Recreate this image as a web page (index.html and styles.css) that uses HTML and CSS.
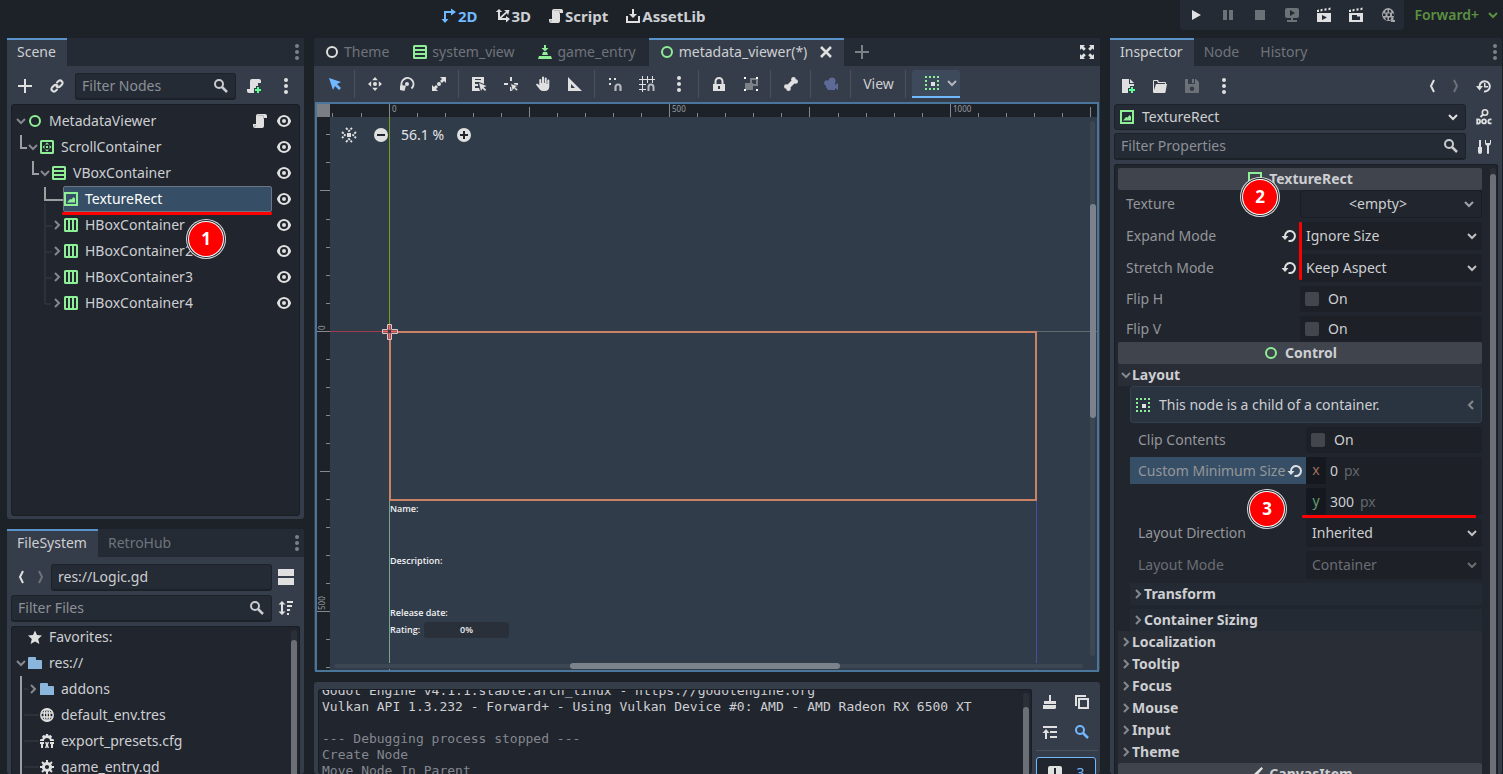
FILE: index.html
```html
<!DOCTYPE html>
<html lang="en">
<head>
<meta charset="utf-8">
<title>metadata_viewer.tscn - Godot Engine</title>
<link rel="stylesheet" href="styles.css">
</head>
<body>
<svg class="defs" aria-hidden="true">
  <symbol id="control" viewBox="0 0 16 16"><circle cx="8" cy="8" r="5" fill="none" stroke="currentColor" stroke-width="2"/></symbol>
  <symbol id="vbox" viewBox="0 0 16 16"><path fill-rule="evenodd" d="M2.500 1A1.500 1.500 0 0 0 1 2.500v11A1.500 1.500 0 0 0 2.500 15h11a1.500 1.500 0 0 0 1.500-1.500v-11A1.500 1.500 0 0 0 13.500 1zM3 3h10v2H3zm0 4h10v2H3zm0 4h10v2H3z"/></symbol>
  <symbol id="hbox" viewBox="0 0 16 16"><path fill-rule="evenodd" d="M2.500 1A1.500 1.500 0 0 0 1 2.500v11A1.500 1.500 0 0 0 2.500 15h11a1.500 1.500 0 0 0 1.500-1.500v-11A1.500 1.500 0 0 0 13.500 1zM3 3h2v10H3zm4 0h2v10H7zm4 0h2v10h-2z"/></symbol>
  <symbol id="scroll" viewBox="0 0 16 16"><path fill-rule="evenodd" d="M2.500 1A1.500 1.500 0 0 0 1 2.500v11A1.500 1.500 0 0 0 2.500 15h11a1.500 1.500 0 0 0 1.500-1.500v-11A1.500 1.500 0 0 0 13.500 1zM3 3h10v10H3z"/><path d="m8 3.500 2 2H6zm0 9-2-2h4zM3.500 8l2-2v4zm9 0-2 2V6zM7 7h2v2H7z"/></symbol>
  <symbol id="texrect" viewBox="0 0 16 16"><path fill-rule="evenodd" d="M1 1v14h14V1zm2 2h10v10H3z"/><path d="M4 11.500h8V7.500L10.500 6 8.500 8.500 7 8z"/></symbol>
  <symbol id="eye" viewBox="0 0 16 16"><path fill-rule="evenodd" d="M8 2C4.900 2 2.100 4.100 1.050 7.400a2 2 0 0 0 0 1.200C2.100 11.900 4.900 14 8 14s5.900-2.100 6.950-5.400a2 2 0 0 0 0-1.200C13.900 4.100 11.100 2 8 2zm0 2a4 4 0 0 1 0 8 4 4 0 0 1 0-8zm0 2a2 2 0 0 0 0 4 2 2 0 0 0 0-4z"/></symbol>
  <symbol id="script" viewBox="0 0 16 16"><path d="M6 1a2 2 0 0 0-2 2v8H1v2a2 2 0 0 0 2 2h7a2 2 0 0 0 2-2V5h3V3a2 2 0 0 0-2-2z"/><path fill="#9a9c9f" d="M6 2v1h5v3h1V3a1 1 0 0 0-1-1zM2 12v1a1 1 0 0 0 1 1 1 1 0 0 0 1-1v-1z" opacity=".6"/></symbol>
  <symbol id="scriptadd" viewBox="0 0 16 16"><path d="M6 1a2 2 0 0 0-2 2v8H1v2a2 2 0 0 0 2 2h5v-5h2V8h2V5h3V3a2 2 0 0 0-2-2z"/><path fill="#5fff97" d="M11 9h2v2h2v2h-2v2h-2v-2H9v-2h2z"/></symbol>
  <symbol id="plus" viewBox="0 0 16 16"><path d="M7 1h2v6h6v2H9v6H7V9H1V7h6z"/></symbol>
  <symbol id="link" viewBox="0 0 16 16"><g fill="none" stroke="currentColor" stroke-width="2" stroke-linecap="round"><path d="M8 4.500 9.500 3a2.500 2.500 0 0 1 3.500 3.500L11 8.500a2.400 2.400 0 0 1-3.500 0"/><path d="M8 11.500 6.500 13A2.500 2.500 0 0 1 3 9.500l2-2a2.400 2.400 0 0 1 3.500 0"/></g></symbol>
  <symbol id="search" viewBox="0 0 16 16"><circle cx="6" cy="6" r="4" fill="none" stroke="currentColor" stroke-width="2"/><path d="m9 9 5 5" stroke="currentColor" stroke-width="2.500"/></symbol>
  <symbol id="dots" viewBox="0 0 16 16"><circle cx="8" cy="2" r="2"/><circle cx="8" cy="8" r="2"/><circle cx="8" cy="14" r="2"/></symbol>
  <symbol id="down" viewBox="0 0 16 16"><path d="m4 6 4 4 4-4" fill="none" stroke="currentColor" stroke-width="2"/></symbol>
  <symbol id="right" viewBox="0 0 16 16"><path d="m6 4 4 4-4 4" fill="none" stroke="currentColor" stroke-width="2"/></symbol>
  <symbol id="back" viewBox="0 0 16 16"><path d="M10 2 7 8l3 6" fill="none" stroke="currentColor" stroke-width="2"/></symbol>
  <symbol id="fwd" viewBox="0 0 16 16"><path d="m6 2 3 6-3 6" fill="none" stroke="currentColor" stroke-width="2"/></symbol>
  <symbol id="folder" viewBox="0 0 16 16"><path d="M2 2a1 1 0 0 0-1 1v11h14V6a1 1 0 0 0-1-1H9V3a1 1 0 0 0-1-1z"/></symbol>
  <symbol id="star" viewBox="0 0 16 16"><path d="m8 1.500 2 4.600 5 .5-3.800 3.400 1.200 5L8 12.400 3.600 15l1.200-5L1 6.600l5-.5z"/></symbol>
  <symbol id="globe" viewBox="0 0 16 16"><g fill="none" stroke="currentColor" stroke-width="1.500"><circle cx="8" cy="8" r="6.200"/><ellipse cx="8" cy="8" rx="2.800" ry="6"/><path d="M8 2v12M2 6h12M2 10h12"/></g></symbol>
  <symbol id="gear" viewBox="0 0 16 16"><circle cx="8" cy="8" r="3.600" fill="none" stroke="currentColor" stroke-width="3"/><path d="M7 1h2v3H7zm0 11h2v3H7zM1 7h3v2H1zm11 0h3v2h-3zM2.300 3.700l1.400-1.400 2 2-1.400 1.400zm8 8 1.400-1.400 2 2-1.400 1.400zm2-9.400 1.400 1.400-2 2-1.400-1.400zM4.300 10.300l1.400 1.400-2 2-1.400-1.400z"/></symbol>
  <symbol id="geartxt" viewBox="0 0 16 16"><path d="M7 1h2l.5 1.800L11.500 2 13 3.500l-1 2L15 6.500V8h-4a3 3 0 0 0-6 0H1V6.500l3-1-1-2L4.500 2l2 .8zM1 9h4v2H4v4H2v-4H1zm5 0h1.500L8 10.500 8.500 9H10l-1 3 1 3H8.500L8 13.500 7.500 15H6l1-3zm5 0h4v2h-1v4h-2v-4h-1z"/></symbol>
  <symbol id="panels" viewBox="0 0 16 16"><path d="M0 0h16v7H0zm0 9h16v7H0z"/></symbol>
  <symbol id="sort" viewBox="0 0 16 16"><path d="m4 1 3.500 3.500H5v7h2.500L4 15 .5 11.500H3v-7H.5zM9 1h6v2H9zm0 4h5v2H9zm0 4h3v2H9zm0 4h2v2H9z"/></symbol>
  <symbol id="d2" viewBox="0 0 16 16"><path d="M10 0.500 15 4l-5 3.500V5H5v6h2.500L4 15 .5 11H3V3h7z"/></symbol>
  <symbol id="d3" viewBox="0 0 16 16"><path d="M4 1 .8 4H3v8h8v2.500l4-3.500-4-3v2H6.500L12 5l1 2.500L14.500 2 9 2l2 1.500L5 9V4h2.200z"/></symbol>
  <symbol id="asset" viewBox="0 0 16 16"><path d="M7 1h2v5h3l-4 4-4-4h3zM1 8h2v5h10V8h2v7H1z"/></symbol>
  <symbol id="play" viewBox="0 0 16 16"><path d="M4 3v10l9-5z"/></symbol>
  <symbol id="pause" viewBox="0 0 16 16"><path d="M3 3h4v10H3zm6 0h4v10H9z"/></symbol>
  <symbol id="stop" viewBox="0 0 16 16"><path d="M3 3h10v10H3z"/></symbol>
  <symbol id="remote" viewBox="0 0 16 16"><path fill-rule="evenodd" d="M3 1a2 2 0 0 0-2 2v6a2 2 0 0 0 2 2h4v2H3v2h10v-2H9v-2h4a2 2 0 0 0 2-2V3a2 2 0 0 0-2-2zm3 2 5 3-5 3z"/></symbol>
  <symbol id="clap" viewBox="0 0 16 16"><path fill-rule="evenodd" d="M1 6h14v9H1zm5 2v5l5-2.500zM1 3l2-.5V5H1zm3.500-.8 2-.4V4l-2 .4zm4-.6 2-.4v2.200l-2 .4zm4-.6 2-.4v2.200l-2 .4z"/></symbol>
  <symbol id="clapf" viewBox="0 0 16 16"><path fill-rule="evenodd" d="M1 6h14v9H1zm3 2v5h8V9.500H9V8zM1 3l2-.5V5H1zm3.500-.8 2-.4V4l-2 .4zm4-.6 2-.4v2.200l-2 .4zm4-.6 2-.4v2.200l-2 .4z"/></symbol>
  <symbol id="reel" viewBox="0 0 16 16"><path fill-rule="evenodd" d="M8 1a6.500 6.500 0 1 0 3 12.500V15h4v-2h-1.500v-2.500A6.500 6.500 0 0 0 8 1zM6 3h1.500v2.500H5zm3 0h1.500l1 2.500H9zM3 6.500h2.500V9H3zm4.500 0H10V9H7.500zm4.500 0h2V9h-2zM5 10.500h2.500V13H6zm4 0h2.500l-1 2.500H9z"/></symbol>
  <symbol id="spawn" viewBox="0 0 16 16"><path d="M7 1h2v3h2.500L8 7.500 4.500 4H7zM6 8h4l1 3H5zM2 12h12l1 3H1z"/></symbol>
  <symbol id="close" viewBox="0 0 16 16"><path d="m3 3 10 10M13 3 3 13" fill="none" stroke="currentColor" stroke-width="2.500"/></symbol>
  <symbol id="expand" viewBox="0 0 16 16"><path d="M1 1h5L4.500 2.500l2.300 2.300-2 2L2.500 4.500 1 6zm9 0h5v5l-1.500-1.500-2.300 2.300-2-2 2.300-2.300zM4.800 9.200l2 2-2.300 2.300L6 15H1v-5l1.500 1.500zm6.400 0 2.300 2.300L15 10v5h-5l1.500-1.500-2.300-2.300z"/></symbol>
  <symbol id="cursor" viewBox="0 0 16 16"><path d="m2 2 4 12 2-4 4 4 2-2-4-4 4-2z"/></symbol>
  <symbol id="move" viewBox="0 0 16 16"><circle cx="8" cy="8" r="2"/><path d="m8 1 2.800 3.200H5.200zm0 14-2.800-3.200h5.600zM1 8l3.200-2.800v5.600zm14 0-3.200 2.800V5.200z"/></symbol>
  <symbol id="rotate" viewBox="0 0 16 16"><path d="M12.500 12.500A6 6 0 1 0 3 10.500" fill="none" stroke="currentColor" stroke-width="2"/><path d="M1 9.500h6L5.500 15 1 14z"/><circle cx="8" cy="8" r="2"/></symbol>
  <symbol id="scale" viewBox="0 0 16 16"><circle cx="8" cy="8" r="2"/><path d="M9 1h6v6l-2-2-2 2-2-2 2-2zM1 9l2 2 2-2 2 2-2 2 2 2H1z"/></symbol>
  <symbol id="listsel" viewBox="0 0 16 16"><path d="M1 1h12v7l-5-2H4v2h3v2H4v2h4l1 3H1zm3 2v1h6V3z" fill-rule="evenodd"/><path d="m8 7 2 8 1.500-2.500L14 15l1.200-1.200-2.500-2.500L15.500 10z"/></symbol>
  <symbol id="pivot" viewBox="0 0 16 16"><path d="M7 1h2v4H7zM1 7h4v2H1zm6 4h2v4H7zm4-4h4v2h-4z"/><path d="m7.500 7.500 2 8 1.600-2.800L13.500 15l1.500-1.500-2.500-2.300L15.500 10z" stroke="#363d4a" stroke-width=".8"/></symbol>
  <symbol id="hand" viewBox="0 0 16 16"><path d="M7 1.500a1 1 0 0 1 2 0V7h.7V2.500a1 1 0 0 1 2 0V8h.6V4.500a1 1 0 0 1 2 0V11a4.500 4.500 0 0 1-4.500 4H8c-2 0-3.500-1.500-4.500-3.200L1.200 9c-.4-1 .8-1.800 1.800-1l1.300 1.300V4a1 1 0 0 1 2 0v3H7z"/></symbol>
  <symbol id="ruler" viewBox="0 0 16 16"><path fill-rule="evenodd" d="M1 1v14h14zm3 7 4 4H4z"/></symbol>
  <symbol id="snap" viewBox="0 0 16 16"><path d="M2 2h2v2H2zm5 0h2v2H7zM2 7h2v2H2z"/><path d="M8.500 15v-4a2.500 2.500 0 0 1 5 0v4" fill="none" stroke="#b8babd" stroke-width="2.200"/></symbol>
  <symbol id="gridsnap" viewBox="0 0 16 16"><path d="M3 0h1v3h4V0h1v3h4V0h1v3h2v1h-2v3h-1V4H9v3H8V4H4v4h3v1H4v4h3v1H4v2H3v-2H0v-1h3V9H0V8h3V4H0V3h3z"/><path d="M9.500 15v-4a2.500 2.500 0 0 1 5 0v4" fill="none" stroke="#b8babd" stroke-width="2"/></symbol>
  <symbol id="lock" viewBox="0 0 16 16"><path fill-rule="evenodd" d="M8 1a4.500 4.500 0 0 0-4.500 4.500V8H2v7h12V8h-1.500V5.500A4.500 4.500 0 0 0 8 1zm0 2a2.500 2.500 0 0 1 2.500 2.500V8h-5V5.500A2.500 2.500 0 0 1 8 3zM7 10h2v3H7z"/></symbol>
  <symbol id="group" viewBox="0 0 16 16"><path d="M7 2h8v8h-5v4H2V7h5z" fill="#7d8188"/><path d="M9 4h4v4h-3V7H9z" fill="#363d4a"/><path d="M1 1h2v2H1zm12 0h2v2h-2zM1 13h2v2H1zm12 0h2v2h-2z" fill="#fff"/></symbol>
  <symbol id="bone" viewBox="0 0 16 16"><path d="m4.500 11.500 7-7" stroke="currentColor" stroke-width="4"/><circle cx="3.300" cy="10.500" r="2.300"/><circle cx="5.500" cy="12.700" r="2.300"/><circle cx="10.500" cy="3.300" r="2.300"/><circle cx="12.700" cy="5.500" r="2.300"/></symbol>
  <symbol id="cam" viewBox="0 0 16 16"><circle cx="9" cy="5" r="3.500"/><circle cx="4" cy="7" r="2.800"/><path d="M3 7h9v2l3-2v7l-3-2v2H5l-2-3z"/></symbol>
  <symbol id="anchor" viewBox="0 0 16 16"><path fill="#8eef97" d="M1 1h2v2H1zm4 0h2v2H5zm4 0h2v2H9zm4 0h2v2h-2zM1 5h2v2H1zm12 0h2v2h-2zM1 9h2v2H1zm12 0h2v2h-2zM1 13h2v2H1zm4 0h2v2H5zm4 0h2v2H9zm4 0h2v2h-2z"/><path fill="#e0e0e0" d="M7 7h4v4H7z"/></symbol>
  <symbol id="center" viewBox="0 0 16 16"><path d="M6 6h4v4H6z"/><path d="M5 1l3 3 3-3M5 15l3-3 3 3M1 5l3 3-3 3M15 5l-3 3 3 3" fill="none" stroke="currentColor" stroke-width="1.800" stroke-dasharray="2.400 .8"/></symbol>
  <symbol id="minus" viewBox="0 0 16 16"><circle cx="8" cy="8" r="7"/><path d="M4 7h8v2H4z" fill="#20262e"/></symbol>
  <symbol id="more" viewBox="0 0 16 16"><circle cx="8" cy="8" r="7"/><path d="M7 4h2v3h3v2H9v3H7V9H4V7h3z" fill="#20262e"/></symbol>
  <symbol id="filenew" viewBox="0 0 16 16"><path d="M2 1h7v5h5v2h-4v2H8v5H2zm8 0 4 4h-4z"/><path fill="#5fff97" d="M11 9h2v2h2v2h-2v2h-2v-2H9v-2h2z"/></symbol>
  <symbol id="load" viewBox="0 0 16 16"><path d="M1 3a1 1 0 0 1 1-1h4l1 2h6a1 1 0 0 1 1 1v1h-1V5H6L5 3H2v9l2-6h11l-1.500 8a1 1 0 0 1-1 1H2a1 1 0 0 1-1-1z"/></symbol>
  <symbol id="save" viewBox="0 0 16 16"><path fill-rule="evenodd" d="M2 1a1 1 0 0 0-1 1v12a1 1 0 0 0 1 1h12a1 1 0 0 0 1-1V4l-3-3h-1v5H4V1zm6 0h2v4H8zM8 8.500a2.300 2.300 0 1 0 0 4.600 2.300 2.300 0 0 0 0-4.600z"/></symbol>
  <symbol id="history" viewBox="0 0 16 16"><path d="M3.500 9A5.200 5.200 0 1 1 8 13.500" fill="none" stroke="currentColor" stroke-width="2"/><path d="M0 8h7l-3.500 4.500zM8 5h1.500v3H12v1.500H8z"/></symbol>
  <symbol id="doc" viewBox="0 0 16 16"><circle cx="9" cy="3.500" r="2.700" fill="none" stroke="currentColor" stroke-width="1.600"/><path d="M7.300 5.300 4.500 8" stroke="currentColor" stroke-width="2"/><g fill="none" stroke="currentColor" stroke-width="1.800"><path d="M1.200 10.300v4.200h1.300a1.500 1.500 0 0 0 1.500-1.500v-1.200a1.500 1.500 0 0 0-1.500-1.500z"/><circle cx="8" cy="12.400" r="2"/><path d="M15.500 10.400h-1.200a2 2 0 0 0 0 4h1.200"/></g></symbol>
  <symbol id="tools" viewBox="0 0 16 16"><path d="M3 1h2v7h1v5a2 2 0 0 1-4 0V8h1zM9 1v3a3 3 0 0 0 2 2.800V14a1 1 0 0 0 2 0V6.800A3 3 0 0 0 15 4V1h-1v3h-4V1z"/></symbol>
  <symbol id="revert" viewBox="0 0 16 16"><path d="M4 8.500A5 5 0 1 1 9 13H7.500" fill="none" stroke="currentColor" stroke-width="2"/><path d="M.5 8H7.500L4 12z"/></symbol>
  <symbol id="brush" viewBox="0 0 16 16"><path d="M14.500 1 16 2.500 9.500 10 7 8zM6 9l2.500 2.500C7 14 4 15 1 14c2-1 2-4 5-5z"/></symbol>
  <symbol id="clear" viewBox="0 0 16 16"><path d="M7 1h2v6h5v3H2V7h5zM1 11h13v3l-1 1H1z"/></symbol>
  <symbol id="copy" viewBox="0 0 16 16"><path fill-rule="evenodd" d="M1 1h11v2H3v9H1zM4 4h11v11H4zm2 2v7h7V6z"/></symbol>
  <symbol id="collapse" viewBox="0 0 16 16"><path d="M1 2h14v2H1zm7 5h7v2H8zm0 5h7v2H8zM4 5l3.500 4H5v6H3V9H.5z"/></symbol>
  <symbol id="warn" viewBox="0 0 16 16"><path fill-rule="evenodd" d="M3 1a2 2 0 0 0-2 2v10a2 2 0 0 0 2 2h10a2 2 0 0 0 2-2V3a2 2 0 0 0-2-2zm4 2h2v6H7zm0 8h2v2H7z"/></symbol>
</svg>

<header class="topbar">
  <div class="space-a"></div>
  <nav class="modes">
    <button class="mode on"><svg class="ic"><use href="#d2"/></svg>2D</button>
    <button class="mode"><svg class="ic"><use href="#d3"/></svg>3D</button>
    <button class="mode"><svg class="ic"><use href="#script"/></svg>Script</button>
    <button class="mode"><svg class="ic"><use href="#asset"/></svg>AssetLib</button>
  </nav>
  <div class="space-b"></div>
  <div class="run">
    <button class="btn" aria-label="Play"><svg class="ic"><use href="#play"/></svg></button>
    <button class="btn dim" aria-label="Pause"><svg class="ic"><use href="#pause"/></svg></button>
    <button class="btn dim" aria-label="Stop"><svg class="ic"><use href="#stop"/></svg></button>
    <button class="btn dim" aria-label="Remote"><svg class="ic"><use href="#remote"/></svg></button>
    <button class="btn" aria-label="Play scene"><svg class="ic"><use href="#clap"/></svg></button>
    <button class="btn" aria-label="Play custom scene"><svg class="ic"><use href="#clapf"/></svg></button>
    <button class="btn soft" aria-label="Movie maker"><svg class="ic"><use href="#reel"/></svg></button>
  </div>
  <button class="renderer">Forward+<svg class="ic"><use href="#down"/></svg></button>
</header>

<main class="docks">
  <div class="left">
    <section class="dock scene">
      <div class="tabs"><button class="tab on">Scene</button><button class="menu" aria-label="Dock menu"><svg class="ic"><use href="#dots"/></svg></button></div>
      <div class="body">
        <div class="bar">
          <button class="btn" aria-label="Add node"><svg class="ic"><use href="#plus"/></svg></button>
          <button class="btn" aria-label="Instance scene"><svg class="ic"><use href="#link"/></svg></button>
          <label class="field"><input type="text" placeholder="Filter Nodes" aria-label="Filter Nodes"><svg class="ic"><use href="#search"/></svg></label>
          <button class="btn" aria-label="Attach script"><svg class="ic"><use href="#scriptadd"/></svg></button>
          <button class="btn" aria-label="More"><svg class="ic"><use href="#dots"/></svg></button>
        </div>
        <div class="tree">
          <svg class="guides"><path d="M9 30v13h6M21 56v13h6M33 82v13h19" fill="none" stroke="#9c9ea2" stroke-width="2"/><path d="M33 98v101h6M33 121h7M33 147h7M33 173h7" fill="none" stroke="#3a3e47" stroke-width="1"/></svg>
          <ul class="rows">
            <li class="row"><svg class="arrow"><use href="#down"/></svg><div class="item"><svg class="ic g"><use href="#control"/></svg>MetadataViewer</div><svg class="ic attached"><use href="#script"/></svg><button class="eye" aria-label="Toggle"><svg class="ic"><use href="#eye"/></svg></button></li>
            <li class="row l1"><svg class="arrow"><use href="#down"/></svg><div class="item"><svg class="ic g"><use href="#scroll"/></svg>ScrollContainer</div><button class="eye" aria-label="Toggle"><svg class="ic"><use href="#eye"/></svg></button></li>
            <li class="row l2"><svg class="arrow"><use href="#down"/></svg><div class="item"><svg class="ic g"><use href="#vbox"/></svg>VBoxContainer</div><button class="eye" aria-label="Toggle"><svg class="ic"><use href="#eye"/></svg></button></li>
            <li class="row l3"><svg class="arrow"></svg><div class="item sel"><svg class="ic g"><use href="#texrect"/></svg>TextureRect</div><button class="eye" aria-label="Toggle"><svg class="ic"><use href="#eye"/></svg></button></li>
            <li class="row l3"><svg class="arrow"><use href="#right"/></svg><div class="item"><svg class="ic g"><use href="#hbox"/></svg>HBoxContainer</div><button class="eye" aria-label="Toggle"><svg class="ic"><use href="#eye"/></svg></button></li>
            <li class="row l3"><svg class="arrow"><use href="#right"/></svg><div class="item"><svg class="ic g"><use href="#hbox"/></svg>HBoxContainer2</div><button class="eye" aria-label="Toggle"><svg class="ic"><use href="#eye"/></svg></button></li>
            <li class="row l3"><svg class="arrow"><use href="#right"/></svg><div class="item"><svg class="ic g"><use href="#hbox"/></svg>HBoxContainer3</div><button class="eye" aria-label="Toggle"><svg class="ic"><use href="#eye"/></svg></button></li>
            <li class="row l3"><svg class="arrow"><use href="#right"/></svg><div class="item"><svg class="ic g"><use href="#hbox"/></svg>HBoxContainer4</div><button class="eye" aria-label="Toggle"><svg class="ic"><use href="#eye"/></svg></button></li>
          </ul>
        </div>
      </div>
      <div class="mark m1"></div><div class="step s1">1</div>
    </section>

    <section class="dock files">
      <div class="tabs"><button class="tab on">FileSystem</button><button class="tab">RetroHub</button><button class="menu" aria-label="Dock menu"><svg class="ic"><use href="#dots"/></svg></button></div>
      <div class="body">
        <div class="bar flush">
          <button class="nav" aria-label="Back"><svg class="ic"><use href="#back"/></svg></button>
          <button class="nav dim" aria-label="Forward"><svg class="ic"><use href="#fwd"/></svg></button>
          <label class="field"><input type="text" value="res://Logic.gd" aria-label="Path"></label>
          <button class="btn" aria-label="Split view"><svg class="ic"><use href="#panels"/></svg></button>
        </div>
        <div class="bar flush second">
          <label class="field"><input type="text" placeholder="Filter Files" aria-label="Filter Files"><svg class="ic"><use href="#search"/></svg></label>
          <button class="btn" aria-label="Sort"><svg class="ic"><use href="#sort"/></svg></button>
        </div>
        <div class="tree">
          <svg class="guides"><path d="M9 49v120" stroke="#9c9ea2" stroke-width="2"/><path d="M12 62h4M12 88h15M12 114h15M12 140h15" stroke="#3a3e47"/></svg>
          <ul class="rows up">
            <li class="row"><svg class="arrow"></svg><div class="item"><svg class="ic"><use href="#star"/></svg>Favorites:</div></li>
            <li class="row"><svg class="arrow"><use href="#down"/></svg><div class="item"><svg class="ic b"><use href="#folder"/></svg>res://</div></li>
            <li class="row l1"><svg class="arrow"><use href="#right"/></svg><div class="item"><svg class="ic b"><use href="#folder"/></svg>addons</div></li>
            <li class="row l1"><svg class="arrow"></svg><div class="item"><svg class="ic"><use href="#globe"/></svg>default_env.tres</div></li>
            <li class="row l1"><svg class="arrow"></svg><div class="item"><svg class="ic"><use href="#geartxt"/></svg>export_presets.cfg</div></li>
            <li class="row l1"><svg class="arrow"></svg><div class="item"><svg class="ic"><use href="#gear"/></svg>game_entry.gd</div></li>
          </ul>
          <div class="vtrack"><div class="vthumb"></div></div>
        </div>
      </div>
    </section>
  </div>

  <div class="middle">
    <section class="dock editor">
      <div class="tabs scenes">
        <button class="tab"><svg class="ic"><use href="#control"/></svg>Theme</button>
        <button class="tab"><svg class="ic g"><use href="#vbox"/></svg>system_view</button>
        <button class="tab"><svg class="ic g"><use href="#spawn"/></svg>game_entry</button>
        <button class="tab on"><svg class="ic g"><use href="#control"/></svg>metadata_viewer(*)<svg class="ic x"><use href="#close"/></svg></button>
        <button class="addtab" aria-label="New scene"><svg class="ic"><use href="#plus"/></svg></button>
        <button class="full" aria-label="Distraction free"><svg class="ic"><use href="#expand"/></svg></button>
      </div>
      <div class="tools">
        <button class="btn blue" aria-label="Select"><svg class="ic"><use href="#cursor"/></svg></button><i class="sep"></i>
        <button class="btn" aria-label="Move"><svg class="ic"><use href="#move"/></svg></button>
        <button class="btn" aria-label="Rotate"><svg class="ic"><use href="#rotate"/></svg></button>
        <button class="btn" aria-label="Scale"><svg class="ic"><use href="#scale"/></svg></button><i class="sep"></i>
        <button class="btn" aria-label="List select"><svg class="ic"><use href="#listsel"/></svg></button>
        <button class="btn" aria-label="Pivot"><svg class="ic"><use href="#pivot"/></svg></button>
        <button class="btn" aria-label="Pan"><svg class="ic"><use href="#hand"/></svg></button>
        <button class="btn" aria-label="Ruler"><svg class="ic"><use href="#ruler"/></svg></button><i class="sep"></i>
        <button class="btn" aria-label="Smart snap"><svg class="ic"><use href="#snap"/></svg></button>
        <button class="btn" aria-label="Grid snap"><svg class="ic"><use href="#gridsnap"/></svg></button>
        <button class="btn" aria-label="Snap options"><svg class="ic"><use href="#dots"/></svg></button><i class="sep"></i>
        <button class="btn" aria-label="Lock"><svg class="ic"><use href="#lock"/></svg></button>
        <button class="btn" aria-label="Group"><svg class="ic"><use href="#group"/></svg></button><i class="sep"></i>
        <button class="btn" aria-label="Skeleton"><svg class="ic"><use href="#bone"/></svg></button><i class="sep"></i>
        <button class="btn camera" aria-label="Camera override"><svg class="ic"><use href="#cam"/></svg></button><i class="sep"></i>
        <button class="view">View</button><i class="sep"></i>
        <button class="anchors" aria-label="Anchors"><svg class="ic"><use href="#anchor"/></svg><svg class="arrow"><use href="#down"/></svg></button>
      </div>
      <div class="viewport">
        <svg class="canvas">
          <path d="M0 0h2000v13H13v2000H0z" fill="#1d2229"/>
          <path d="M0 0h13v13H0z" fill="#7b7f85"/>
          <path stroke="#85888d" d="M15.500 9v4M44.500 9v4M100.500 9v4M128.500 9v4M156.500 9v4M184.500 9v4M212.500 3v10M240.500 9v4M268.500 9v4M296.500 9v4M324.500 9v4M380.500 9v4M408.500 9v4M436.500 9v4M464.500 9v4M492.500 3v10M521.500 9v4M549.500 9v4M577.500 9v4M605.500 9v4M661.500 9v4M689.500 9v4M717.500 9v4M745.500 9v4M773.500 3v10M72.500 0v13M352.500 0v13M633.500 0v13"/>
          <path stroke="#85888d" d="M9 30.500h4M9 58.500h4M3 86.500h10M9 115.500h4M9 143.500h4M9 171.500h4M9 199.500h4M0 227.500h13M9 255.500h4M9 283.500h4M9 311.500h4M9 339.500h4M3 367.500h10M9 395.500h4M9 423.500h4M9 451.500h4M9 479.500h4M0 507.500h13M9 535.500h4M9 563.500h4"/>
          <path d="M13 227.500h59" stroke="#a03c50"/>
          <path d="M72.500 13v214" stroke="#76a019"/>
          <path d="M72.500 228v400" stroke="#7aa387"/>
          <path d="M719 227.500h1000" stroke="#5a6e72"/>
          <path d="M719.500 396v400" stroke="#4a4f9c"/>
          <rect x="73" y="228" width="646" height="168" fill="none" stroke="#c98264" stroke-width="2"/>
          <path d="M70.500 220.500h4v5h6v4h-6v6h-4v-6h-5v-4h5z" fill="#313c4a" stroke="#d9c9cb"/>
          <path d="M72.500 221v5M72.500 229v6M66 227.500h5M74 227.500h6" stroke="#ff6464" stroke-width="2"/>
          <g class="num"><text x="75" y="8">0</text><text x="355" y="8">500</text><text x="636" y="8">1000</text><text transform="translate(8 226) rotate(-90)">0</text><text transform="translate(8 506) rotate(-90)">500</text></g>
        </svg>
        <div class="zoom"><button aria-label="Center view"><svg class="ic"><use href="#center"/></svg></button><button aria-label="Zoom out"><svg class="ic"><use href="#minus"/></svg></button><span>56.1 %</span><button aria-label="Zoom in"><svg class="ic"><use href="#more"/></svg></button></div>
        <div class="node n1">Name:</div>
        <div class="node n2">Description:</div>
        <div class="node n3">Release date:</div>
        <div class="node n4">Rating:</div>
        <div class="node rate">0%</div>
        <div class="hbar"><div class="hthumb"></div></div>
        <div class="vbar"><div class="vthumb"></div></div>
      </div>
    </section>
    <section class="dock output">
      <div class="log"><pre>Godot Engine v4.1.1.stable.arch_linux - https://godotengine.org
Vulkan API 1.3.232 - Forward+ - Using Vulkan Device #0: AMD - AMD Radeon RX 6500 XT

<span>--- Debugging process stopped ---
Create Node
Move Node In Parent</span></pre><div class="vtrack"><div class="vthumb"></div></div></div>
      <div class="side">
        <div class="grid4">
          <button class="btn" aria-label="Clear"><svg class="ic"><use href="#clear"/></svg></button>
          <button class="btn" aria-label="Copy"><svg class="ic"><use href="#copy"/></svg></button>
          <button class="btn" aria-label="Collapse"><svg class="ic"><use href="#collapse"/></svg></button>
          <button class="btn blue" aria-label="Search"><svg class="ic"><use href="#search"/></svg></button>
        </div>
        <button class="count"><svg class="ic"><use href="#warn"/></svg><span>3</span></button>
      </div>
    </section>
  </div>

  <section class="dock inspector">
    <div class="tabs"><button class="tab on">Inspector</button><button class="tab">Node</button><button class="tab">History</button><button class="menu" aria-label="Dock menu"><svg class="ic"><use href="#dots"/></svg></button></div>
    <div class="body">
      <div class="bar">
        <button class="btn" aria-label="New resource"><svg class="ic"><use href="#filenew"/></svg></button>
        <button class="btn" aria-label="Load"><svg class="ic"><use href="#load"/></svg></button>
        <button class="btn dim" aria-label="Save"><svg class="ic"><use href="#save"/></svg></button>
        <button class="btn" aria-label="Extra"><svg class="ic"><use href="#dots"/></svg></button>
        <span class="grow"></span>
        <button class="nav" aria-label="Previous"><svg class="ic"><use href="#back"/></svg></button>
        <button class="nav dim" aria-label="Next"><svg class="ic"><use href="#fwd"/></svg></button>
        <button class="btn" aria-label="History"><svg class="ic"><use href="#history"/></svg></button>
      </div>
      <div class="bar tight">
        <button class="object"><svg class="ic g"><use href="#texrect"/></svg><span>TextureRect</span><svg class="ic"><use href="#down"/></svg></button>
        <button class="btn" aria-label="Documentation"><svg class="ic"><use href="#doc"/></svg></button>
      </div>
      <div class="bar tight">
        <label class="field"><input type="text" placeholder="Filter Properties" aria-label="Filter Properties"><svg class="ic"><use href="#search"/></svg></label>
        <button class="btn" aria-label="Tools"><svg class="ic"><use href="#tools"/></svg></button>
      </div>
      <div class="props">
        <div class="list">
          <h2 class="cat"><svg class="ic g"><use href="#texrect"/></svg>TextureRect</h2>
          <div class="prop"><span class="name">Texture</span><button class="res"><span>&lt;empty&gt;</span><svg class="arrow"><use href="#down"/></svg></button></div>
          <div class="prop"><label class="name" for="ex">Expand Mode</label><svg class="ic rev"><use href="#revert"/></svg><div class="pick"><select id="ex"><option>Ignore Size</option></select><svg class="ic"><use href="#down"/></svg></div></div>
          <div class="prop"><label class="name" for="st">Stretch Mode</label><svg class="ic rev"><use href="#revert"/></svg><div class="pick"><select id="st"><option>Keep Aspect</option></select><svg class="ic"><use href="#down"/></svg></div></div>
          <div class="prop"><span class="name">Flip H</span><label class="check"><input type="checkbox">On</label></div>
          <div class="prop last"><span class="name">Flip V</span><label class="check"><input type="checkbox">On</label></div>
          <h2 class="cat"><svg class="ic g"><use href="#control"/></svg>Control</h2>
          <h3 class="sect"><svg class="arrow"><use href="#down"/></svg>Layout</h3>
          <div class="nest">
            <div class="info"><svg class="ic"><use href="#anchor"/></svg><span>This node is a child of a container.</span><svg class="arrow left-arrow"><use href="#right"/></svg></div>
            <div class="prop"><span class="name">Clip Contents</span><label class="check"><input type="checkbox">On</label></div>
            <div class="prop top"><div class="name hot"><span>Custom Minimum Size</span><svg class="ic"><use href="#revert"/></svg></div><div class="vec"><label><b class="x">x</b><input class="c1" type="text" value="0"><i>px</i></label><label><b class="y">y</b><input class="c3" type="text" value="300"><i>px</i></label></div></div>
            <div class="prop"><label class="name" for="ld">Layout Direction</label><div class="pick"><select id="ld"><option>Inherited</option></select><svg class="ic"><use href="#down"/></svg></div></div>
            <div class="prop off"><label class="name" for="lm">Layout Mode</label><div class="pick"><select id="lm" disabled><option>Container</option></select><svg class="ic"><use href="#down"/></svg></div></div>
            <h3 class="sect sub gap"><svg class="arrow"><use href="#right"/></svg>Transform</h3>
            <h3 class="sect sub"><svg class="arrow"><use href="#right"/></svg>Container Sizing</h3>
          </div>
          <h3 class="sect"><svg class="arrow"><use href="#right"/></svg>Localization</h3>
          <h3 class="sect"><svg class="arrow"><use href="#right"/></svg>Tooltip</h3>
          <h3 class="sect"><svg class="arrow"><use href="#right"/></svg>Focus</h3>
          <h3 class="sect"><svg class="arrow"><use href="#right"/></svg>Mouse</h3>
          <h3 class="sect"><svg class="arrow"><use href="#right"/></svg>Input</h3>
          <h3 class="sect"><svg class="arrow"><use href="#right"/></svg>Theme</h3>
          <h2 class="cat"><svg class="ic"><use href="#brush"/></svg>CanvasItem</h2>
        </div>
        <div class="vtrack"><div class="vthumb"></div></div>
      </div>
    </div>
    <div class="step s2">2</div><div class="mark m2"></div>
    <div class="step s3">3</div><div class="mark m3"></div>
  </section>
</main>
</body>
</html>
```
FILE: styles.css
```css
* { box-sizing: border-box; }
html, body { height: 100%; }
body {
  margin: 0;
  display: flex;
  flex-direction: column;
  overflow: hidden;
  background: #1d2229;
  color: #cdcfd2;
  font: 14px/20px "Noto Sans", "Open Sans", sans-serif;
}
button, input, select { font: inherit; color: inherit; margin: 0; padding: 0; border: 0; background: none; outline: 0; }
button { display: flex; align-items: center; justify-content: center; }
h2, h3, ul, pre { margin: 0; padding: 0; font-size: 14px; }
.defs { position: absolute; width: 0; height: 0; }
.ic { width: 16px; height: 16px; flex: none; fill: currentColor; color: #e0e0e0; display: block; }
.arrow { width: 16px; height: 16px; margin: 0 -2px; flex: none; fill: none; color: #85888d; display: block; }
.g { color: #8eef97; }
.b { color: #8ab5dd; }
.btn { width: 28px; height: 28px; flex: none; }
.nav { width: 20px; height: 28px; flex: none; }
.dim .ic { color: #6d7178; }
.soft .ic { color: #a4a6aa; }
.blue .ic { color: #70b8ff; }
.grow { flex: 1; }

/* top bar */
.topbar { display: flex; height: 38px; flex: none; padding-right: 2px; }
.space-a { flex: 13; }
.space-b { flex: 14; }
.modes { display: flex; gap: 17px; height: 32px; }
.mode { gap: 1px; font-size: 15px; font-weight: 700; }
.mode.on, .mode.on .ic { color: #70b8ff; }
.run { display: flex; gap: 4px; height: 30px; padding: 1px 2px; background: #252b34; border-radius: 0 0 3px 3px; }
.renderer { height: 30px; padding-left: 10px; gap: 6px; font-weight: 600; color: #5b9140; }
.renderer .ic { color: #5b9140; }

/* docks */
.docks { flex: 1; min-height: 0; display: grid; grid-template-columns: 297px minmax(0, 1fr) 393px; gap: 10px; padding-left: 7px; }
.left { display: grid; grid-template-rows: minmax(0, 1fr) 245px; gap: 10px; min-height: 0; }
.middle { display: grid; grid-template-rows: minmax(0, 1fr) 92px; gap: 10px; min-height: 0; }
.dock { position: relative; min-height: 0; min-width: 0; display: flex; flex-direction: column; border-radius: 3px; background: #363d4a; }
.tabs { display: flex; height: 28px; flex: none; background: #252b34; border-radius: 3px 3px 0 0; }
.tab { padding: 0 11px 2px 10px; color: #6f747c; border-top: 2px solid transparent; }
.tab.on { color: #cdcfd2; background: #363d4a; border-top-color: #5a93c9; }
.menu { margin-left: auto; width: 14px; }
.menu .ic { color: #7c8087; }
.body { flex: 1; min-height: 0; display: flex; flex-direction: column; padding: 6px 4px 3px; }
.bar { display: flex; align-items: center; gap: 4px; height: 28px; flex: none; }
.bar.flush { gap: 0; }
.field { flex: 1; min-width: 0; height: 27px; display: flex; align-items: center; padding: 0 6px; background: #252b34; border: 1px solid #1d2229; border-bottom-width: 2px; border-radius: 3px; }
.field input { flex: 1; min-width: 0; }
.field input::placeholder { color: #8c9097; opacity: 1; }
.field .ic { color: #c9cbce; }

/* trees */
.tree { position: relative; flex: 1; min-height: 0; overflow: hidden; margin-top: 4px; background: #21252e; border: 1px solid #191d24; border-radius: 3px; }
.scene .tree { padding-top: 3px; }
.files .body, .inspector .body { padding-bottom: 0; }
.files .tree, .inspector .props { border-bottom: 0; border-radius: 3px 3px 0 0; }
.rows { list-style: none; }
.rows.up { margin-top: -3px; }
.guides { position: absolute; left: 0; top: 0; width: 60px; height: 100%; }
.row { display: flex; align-items: center; height: 26px; padding: 0 7px 0 3px; position: relative; }
.row.l1 { padding-left: 15px; }
.row.l2 { padding-left: 27px; }
.row.l3 { padding-left: 39px; }
.item { flex: 1; height: 26px; display: flex; align-items: center; gap: 6px; border: 1px solid transparent; border-left: 0; margin-right: 4px; }
.sel { background: #374f66; border: 1px solid #6b7583; border-radius: 2px; color: #fff; }
.sel .ic { margin-left: -1px; }
.attached { margin-right: 8px; }
.eye { width: 16px; }
.vtrack { position: absolute; right: 2px; top: 3px; bottom: 0; width: 6px; padding-top: 10px; background: #2b2f37; border-radius: 3px 3px 0 0; }
.vthumb { height: 100%; background: #6c6f75; border-radius: 3px 3px 0 0; }
.second { margin-top: 3px; }

/* scene tabs and canvas tools */
.scenes .tab { gap: 4px; padding: 0 13px 2px 10px; }
.scenes .tab.on { padding: 0 10px 2px; }
.scenes .x { margin-left: 7px; }
.addtab { width: 36px; }
.addtab .ic { color: #7c8087; }
.full { margin-left: auto; width: 26px; }
.tools { display: flex; align-items: center; gap: 4px; height: 36px; flex: none; padding: 0 7px; }
.sep { width: 4px; height: 28px; flex: none; border-left: 1px solid #4a515d; margin-left: 1px; margin-right: -1px; }
.camera .ic { color: #5d6a98; }
.view { width: 43px; height: 28px; }
.anchors { width: 48px; height: 28px; gap: 6px; padding-left: 10px; background: #3d4a5b; border-bottom: 2px solid #70b8ff; border-radius: 3px 3px 0 0; }
.anchors .arrow { color: #b3b6ba; }
.viewport { position: relative; flex: 1; min-height: 0; overflow: hidden; margin: 0 1px; border: 2px solid #4b769c; background: #313c4a; }
.canvas { position: absolute; inset: 0; width: 100%; height: 100%; }
.num { font-size: 8px; fill: #9a9da2; }
.zoom { position: absolute; left: 24px; top: 21px; display: flex; align-items: center; gap: 12px; color: #e4e5e7; }
.zoom button:first-child { margin-right: 4px; }
.node { position: absolute; left: 73px; font: 600 9px/14px "Open Sans", "Noto Sans", sans-serif; color: #f0f1f2; }
.n1 { top: 398px; }
.n2 { top: 450px; }
.n3 { top: 502px; }
.n4 { top: 519px; }
.rate { left: 107px; top: 518px; width: 85px; height: 16px; line-height: 16px; text-align: center; background: #2a3039; border-radius: 3px; }
.hbar { position: absolute; left: 17px; right: 14px; bottom: 1px; height: 6px; border: solid #313c4a; border-width: 1px 0; background: #3d4754; border-radius: 3px; }
.hthumb { position: absolute; left: 31.5%; width: 36%; height: 6px; top: -1px; background: #7c828b; border-radius: 3px; }
.vbar { position: absolute; right: 2px; top: 17px; bottom: 14px; width: 5px; background: #3d4754; border-radius: 3px; }
.vbar .vthumb { position: absolute; top: 15.5%; height: 40%; width: 6px; background: #7c828b; border-radius: 3px; }

/* output */
.output { flex-direction: row; align-items: stretch; gap: 4px; padding: 7px 2px 0 4px; overflow: hidden; }
.log { position: relative; flex: 1; min-width: 0; overflow: hidden; background: #21252e; border: 1px solid #191d24; border-bottom: 0; border-radius: 3px; }
.log pre { margin-top: -7px; padding-left: 3px; font: 13px/16px "DejaVu Sans Mono", "Liberation Mono", monospace; }
.log span { color: #85888e; }
.log .vtrack { padding-top: 14px; }
.side { width: 62px; flex: none; margin-top: -1px; }
.grid4 { display: grid; grid-template-columns: 28px 28px; gap: 2px 4px; padding-bottom: 4px; border-bottom: 1px solid #4a515d; }
.count { width: 60px; height: 32px; margin-top: 6px; gap: 13px; border: 1px solid #70b8ff; border-radius: 3px; background: #21252e; color: #70b8ff; }

/* inspector */
.inspector { border-right: 1px solid #1a1e25; }
.bar.tight { height: 27px; margin-top: 3px; }
.object { flex: 1; height: 26px; justify-content: flex-start; gap: 7px; padding: 0 4px; background: #252b34; border: 1px solid #1d2229; border-radius: 3px; text-align: left; }
.object span { flex: 1; }
.props { position: relative; flex: 1; min-height: 0; overflow: hidden; margin-top: 4px; padding: 3px 15px 0 3px; background: #21252e; border: 1px solid #191d24; border-radius: 3px; }
.props .vtrack { right: 1px; padding-top: 6px; }
.cat { height: 22px; display: flex; align-items: center; justify-content: center; gap: 6px; background: #40444d; border-radius: 2px; font-weight: 700; }
.prop { display: flex; align-items: center; margin-bottom: 4px; }
.prop.last { margin-bottom: 0; }
.name { flex: 1; padding-left: 8px; color: #94969a; }
.rev { margin: 0 3px 0 -19px; }
.pick, .res, .check, .vec { width: 50%; flex: none; background: #1d2027; border-radius: 3px; }
.pick { display: grid; height: 28px; align-items: center; }
.pick select { grid-area: 1/1; appearance: none; height: 28px; padding-left: 6px; }
.pick .ic { grid-area: 1/1; justify-self: end; margin-right: 2px; pointer-events: none; color: #bfc1c4; }
.res { height: 28px; background: #21252e; border: 1px solid #191d24; padding-right: 6px; }
.res span { flex: 1; }
.res .arrow { margin-left: 6px; color: #a3a5a9; }
.check { height: 26px; display: flex; align-items: center; gap: 9px; padding-left: 5px; }
.check input { appearance: none; width: 14px; height: 14px; background: #43464c; border-radius: 2px; }
.sect { height: 22px; display: flex; align-items: center; padding-left: 2px; background: #292d36; font-weight: 700; }
.sect.sub { background: #242a33; }
.sect.gap { margin-bottom: 4px; }
.nest { margin-left: 12px; }
.info { display: flex; align-items: center; gap: 8px; height: 37px; margin-bottom: 4px; padding: 0 4px; background: #2a3441; border: 1px solid #343f4d; border-radius: 3px; }
.info span { flex: 1; }
.left-arrow { rotate: 180deg; }
.prop.top { align-items: flex-start; }
.hot { height: 27px; display: flex; align-items: center; background: #374f66; white-space: nowrap; gap: 2px; }
.vec { display: grid; gap: 4px; }
.vec label { display: flex; align-items: center; height: 27px; gap: 4px; }
.vec b { width: 20px; height: 27px; line-height: 26px; text-align: center; font-weight: 400; background: #15181e; border-radius: 3px 0 0 3px; }
.vec .x { color: #a0705f; }
.vec .y { color: #5fa071; }
.vec i { font-style: normal; color: #63666b; }
.vec .c1 { width: 10px; }
.vec .c3 { width: 26px; }
.off .name, .off select, .off .ic { color: #6b6e73; opacity: 1; }

/* numbered callouts */
.step { position: absolute; width: 34px; height: 34px; border-radius: 50%; background: #f00; color: #fff; font: 700 17px/34px "Open Sans", sans-serif; text-align: center; box-shadow: 0 0 0 1px #fff, 0 0 0 2px #23262d, 0 0 0 3px #d9dadb; }
.mark { position: absolute; background: #f00; border-radius: 1px; }
.m1 { left: 55px; top: 174px; width: 210px; height: 3px; }
.m2 { left: 189px; top: 184px; width: 3px; height: 58px; }
.m3 { left: 192px; top: 477px; width: 174px; height: 3px; }
.s1 { left: 182px; top: 184px; }
.s2 { left: 133px; top: 142px; }
.s3 { left: 140px; top: 454px; }
```
